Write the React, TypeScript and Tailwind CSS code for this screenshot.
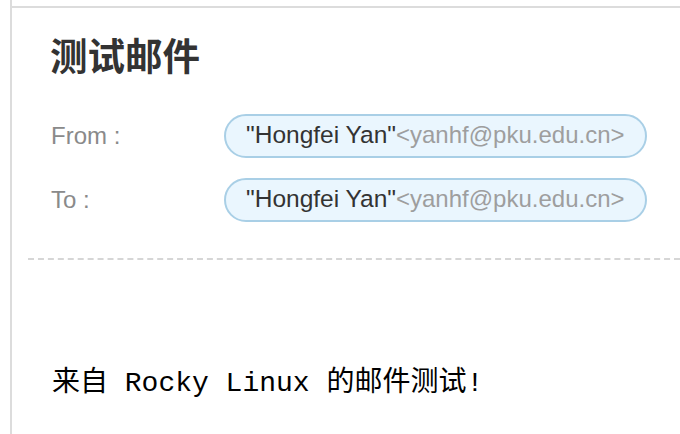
export default function App() {
  const rows = [
    { label: 'From :', name: '"Hongfei Yan"', email: '<yanhf@pku.edu.cn>' },
    { label: 'To :', name: '"Hongfei Yan"', email: '<yanhf@pku.edu.cn>' },
  ]

  return (
    <div className="h-[434px] w-[680px] overflow-hidden bg-white">
      <div className="ml-[10px] h-full border-l-2 border-[#dcdcdc] pt-[6px]">
        <div className="border-t-2 border-[#dcdcdc] pt-[27px]">
          <h1 className="ml-[38px] text-[37.5px] font-bold leading-none text-[#333] [font-family:'Noto_Sans_CJK_SC',sans-serif]">
            测试邮件
          </h1>

          <div className="mt-[41px] flex flex-col gap-[20px] [font-family:'Liberation_Sans',sans-serif]">
            {rows.map((r) => (
              <div key={r.label} className="flex items-center">
                <div className="ml-[39px] w-[173px] text-[24px] leading-[40px] text-[#8a8a8a]">{r.label}</div>
                <div className="h-[44px] whitespace-nowrap rounded-full border-2 border-[#a9cfe6] bg-[#eaf6fe] px-[20px] leading-[38px]">
                  <span className="text-[24.5px] text-[#333]">{r.name}</span>
                  <span className="text-[24px] text-[#9e9e9e]">{r.email}</span>
                </div>
              </div>
            ))}
          </div>

          <div className="ml-[16px] mt-[36px] border-t-2 border-dashed border-[#d6d6d6]" />

          <p className="ml-[40px] mt-[110px] text-[28px] leading-none text-black [font-family:'Liberation_Mono','Noto_Sans_CJK_SC',monospace]">
            来自 Rocky Linux 的邮件测试!
          </p>
        </div>
      </div>
    </div>
  )
}
